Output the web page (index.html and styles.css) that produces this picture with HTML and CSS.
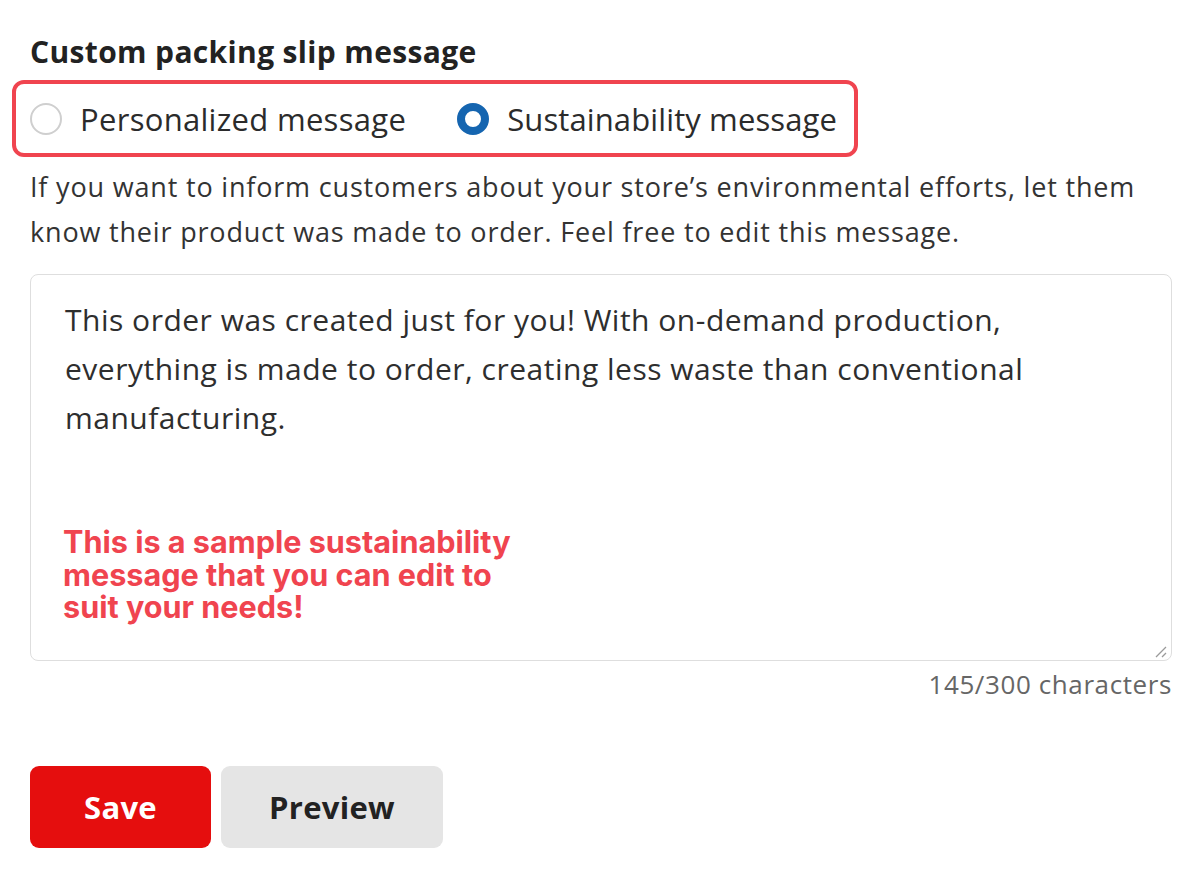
FILE: index.html
```html
<!DOCTYPE html>
<html lang="en">
<head>
<meta charset="utf-8">
<title>Custom packing slip message</title>
<link rel="stylesheet" href="styles.css">
</head>
<body>
<main class="panel">
  <h2 class="title">Custom packing slip message</h2>
  <div class="radio-group">
    <label class="radio">
      <span class="radio-dot"></span>
      <span class="radio-label">Personalized message</span>
    </label>
    <label class="radio radio-checked">
      <span class="radio-dot"></span>
      <span class="radio-label">Sustainability message</span>
    </label>
  </div>
  <p class="help">If you want to inform customers about your store’s environmental efforts, let them know their product was made to order. Feel free to edit this message.</p>
  <div class="textarea">
    <p class="textarea-text">This order was created just for you! With on-demand production, everything is made to order, creating less waste than conventional manufacturing.</p>
    <p class="note">This is a sample sustainability message that you can edit to suit your needs!</p>
    <svg class="resize" width="14" height="14" viewBox="0 0 14 14"><path d="M13 3 L3 13 M13 9 L9 13" stroke="#9a9a9a" stroke-width="1.3" fill="none"/></svg>
  </div>
  <div class="count">145/300 characters</div>
  <div class="actions">
    <button class="btn btn-primary">Save</button>
    <button class="btn btn-secondary">Preview</button>
  </div>
</main>
</body>
</html>
```
FILE: styles.css
```css
* { box-sizing: border-box; }
body {
  margin: 0;
  background: #fff;
  font-family: "Open Sans", "Noto Sans", sans-serif;
  color: #2b2b2b;
}
.panel {
  padding: 30px 28px 0 30px;
  width: 1200px;
}
.title {
  margin: 0;
  font-size: 30px;
  line-height: 44px;
  font-weight: 700;
  letter-spacing: 0.35px;
  color: #222;
}
.radio-group {
  display: inline-flex;
  align-items: center;
  gap: 51px;
  margin: 6px 0 0 -18px;
  height: 77px;
  width: 846px;
  padding: 0 14px;
  border: 4px solid #f0444f;
  border-radius: 12px;
}
.radio {
  display: flex;
  align-items: center;
  gap: 18px;
}
.radio-dot {
  flex: none;
  width: 32px;
  height: 32px;
  border-radius: 50%;
  border: 2px solid #cfcfcf;
  background: #fff;
}
.radio-checked .radio-dot {
  border: 8px solid #1565b0;
}
.radio-label {
  font-size: 31px;
  line-height: 40px;
  letter-spacing: 0.3px;
  color: #2b2b2b;
  white-space: nowrap;
}
.radio-checked .radio-label {
  letter-spacing: 0.12px;
}
.help {
  margin: 7px 0 0;
  font-size: 27px;
  line-height: 45px;
  letter-spacing: 0.82px;
  color: #333;
  max-width: 1140px;
}
.textarea {
  position: relative;
  margin-top: 20px;
  width: 1142px;
  height: 387px;
  border: 1px solid #dedede;
  border-radius: 8px;
  padding: 20px 34px 0;
}
.textarea-text {
  margin: 0;
  font-size: 30px;
  line-height: 49px;
  letter-spacing: 0.5px;
  color: #2e2e2e;
  max-width: 1040px;
}
.note {
  margin: 84px 0 0 -2px;
  font-family: "Inter", sans-serif;
  font-weight: 700;
  font-size: 30.6px;
  line-height: 32.5px;
  color: #f0444f;
  max-width: 470px;
}
.resize {
  position: absolute;
  right: 4px;
  bottom: 2px;
}
.count {
  width: 1142px;
  text-align: right;
  font-size: 26px;
  line-height: 46px;
  letter-spacing: 0.6px;
  color: #666;
}
.actions {
  display: flex;
  gap: 10px;
  margin-top: 59px;
}
.btn {
  height: 82px;
  border: none;
  border-radius: 9px;
  font-family: "Open Sans", "Noto Sans", sans-serif;
  font-weight: 700;
  font-size: 31px;
  letter-spacing: 0.3px;
}
.btn-primary {
  width: 181px;
  background: #e50e0e;
  color: #fff;
}
.btn-secondary {
  width: 222px;
  background: #e5e5e5;
  color: #222;
}
```
